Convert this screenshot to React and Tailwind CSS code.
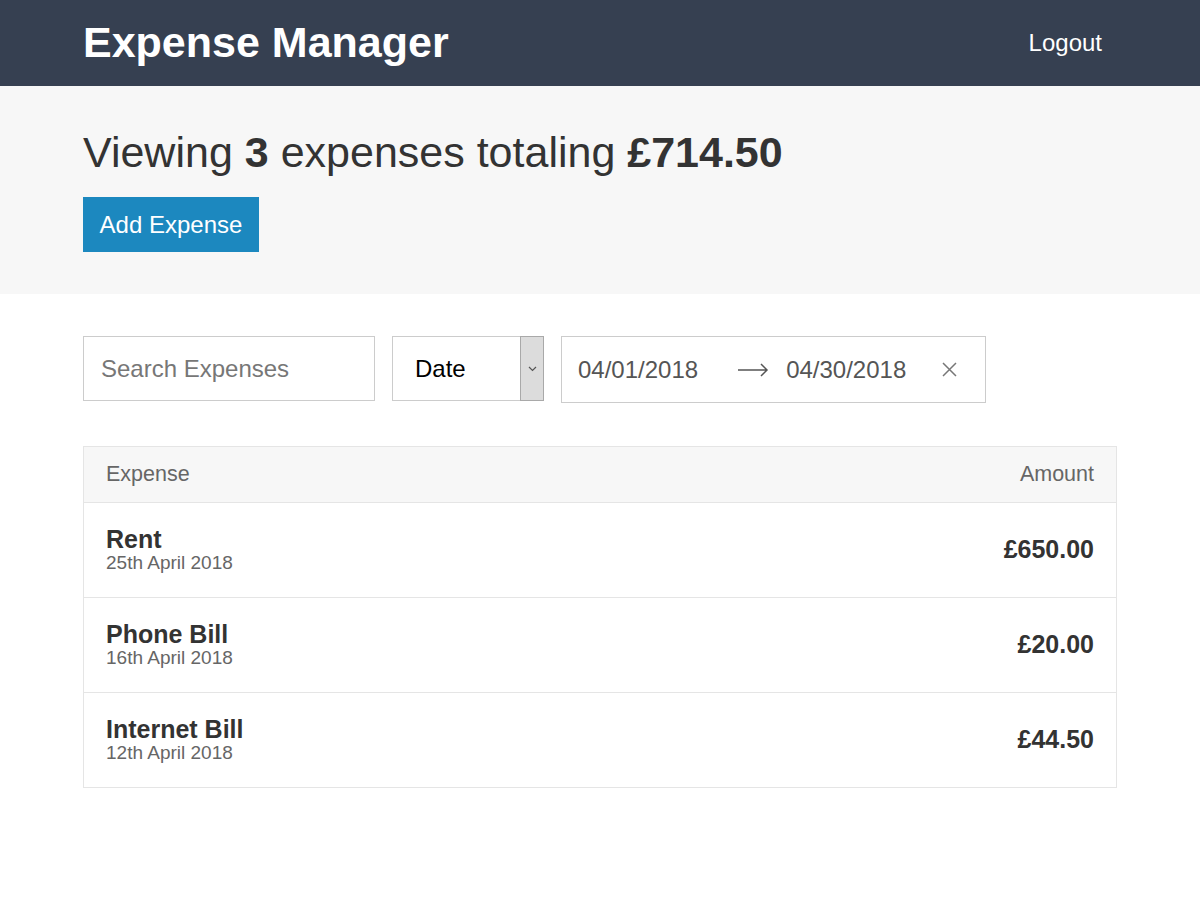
import React from 'react';

const expenses = [
  { name: 'Rent', date: '25th April 2018', amount: '£650.00' },
  { name: 'Phone Bill', date: '16th April 2018', amount: '£20.00' },
  { name: 'Internet Bill', date: '12th April 2018', amount: '£44.50' },
];

const ExpenseRow = ({ item }) => (
  <div className="flex items-center justify-between h-[95px] px-[22px] border-t border-[#e5e5e5]">
    <div>
      <h3 className="text-[25px] font-bold text-[#333] leading-[26px]">{item.name}</h3>
      <span className="block text-[19px] text-[#666] leading-[22px]">{item.date}</span>
    </div>
    <h3 className="text-[25px] font-bold text-[#333]">{item.amount}</h3>
  </div>
);

export default function App() {
  return (
    <div className="min-h-[900px] bg-white font-['Liberation_Sans',Arial,sans-serif]">
      <header className="bg-[#364051] h-[86px]">
        <div className="w-[1034px] mx-auto h-full flex items-center justify-between">
          <h1 className="text-[43px] font-bold text-white pb-[2px]">Expense Manager</h1>
          <button className="text-[24px] text-white pr-[15px]">Logout</button>
        </div>
      </header>

      <div className="bg-[#f7f7f7] h-[208px]">
        <div className="w-[1034px] mx-auto pt-[38px]">
          <h2 className="text-[43px] text-[#333] leading-[56px]">
            Viewing <span className="font-bold">3</span> expenses totaling <span className="font-bold">£714.50</span>
          </h2>
          <button className="mt-[17px] bg-[#1c88bf] text-white text-[24px] h-[55px] w-[176px]">Add Expense</button>
        </div>
      </div>

      <div className="w-[1034px] mx-auto">
        <div className="flex items-start gap-[17px] mt-[42px]">
          <div className="w-[292px] h-[65px] border border-[#ccc] flex items-center px-[17px]">
            <span className="text-[24px] text-[#777]">Search Expenses</span>
          </div>
          <div className="w-[152px] h-[65px] border border-[#ccc] flex">
            <div className="flex-1 flex items-center pl-[22px] text-[24px] text-black">Date</div>
            <div className="w-[24px] -my-px -mr-px bg-[#dcdcdc] border border-[#a9a9a9] flex items-center justify-center">
              <svg width="9" height="6" viewBox="0 0 9 6" fill="none" stroke="#555" strokeWidth="1.2">
                <path d="M1 1l3.5 3.5L8 1" />
              </svg>
            </div>
          </div>
          <div className="w-[425px] h-[67px] border border-[#ccc] flex items-center pl-[16px] text-[24px] text-[#555]">
            <span>04/01/2018</span>
            <svg className="ml-[40px]" width="31" height="14" viewBox="0 0 31 14" fill="none" stroke="#555" strokeWidth="1.5">
              <path d="M0 7h29M23 1l6 6-6 6" />
            </svg>
            <span className="ml-[17px]">04/30/2018</span>
            <svg className="ml-[35px]" width="17" height="17" viewBox="0 0 17 17" fill="none" stroke="#777" strokeWidth="1.5">
              <path d="M2 2l13 13M15 2L2 15" />
            </svg>
          </div>
        </div>

        <div className="mt-[43px] border border-[#e5e5e5]">
          <div className="flex items-center justify-between h-[55px] bg-[#f7f7f7] px-[22px] text-[21.5px] text-[#666]">
            <span>Expense</span>
            <span>Amount</span>
          </div>
          {expenses.map((item) => (
            <ExpenseRow key={item.name} item={item} />
          ))}
        </div>
      </div>
    </div>
  );
}
